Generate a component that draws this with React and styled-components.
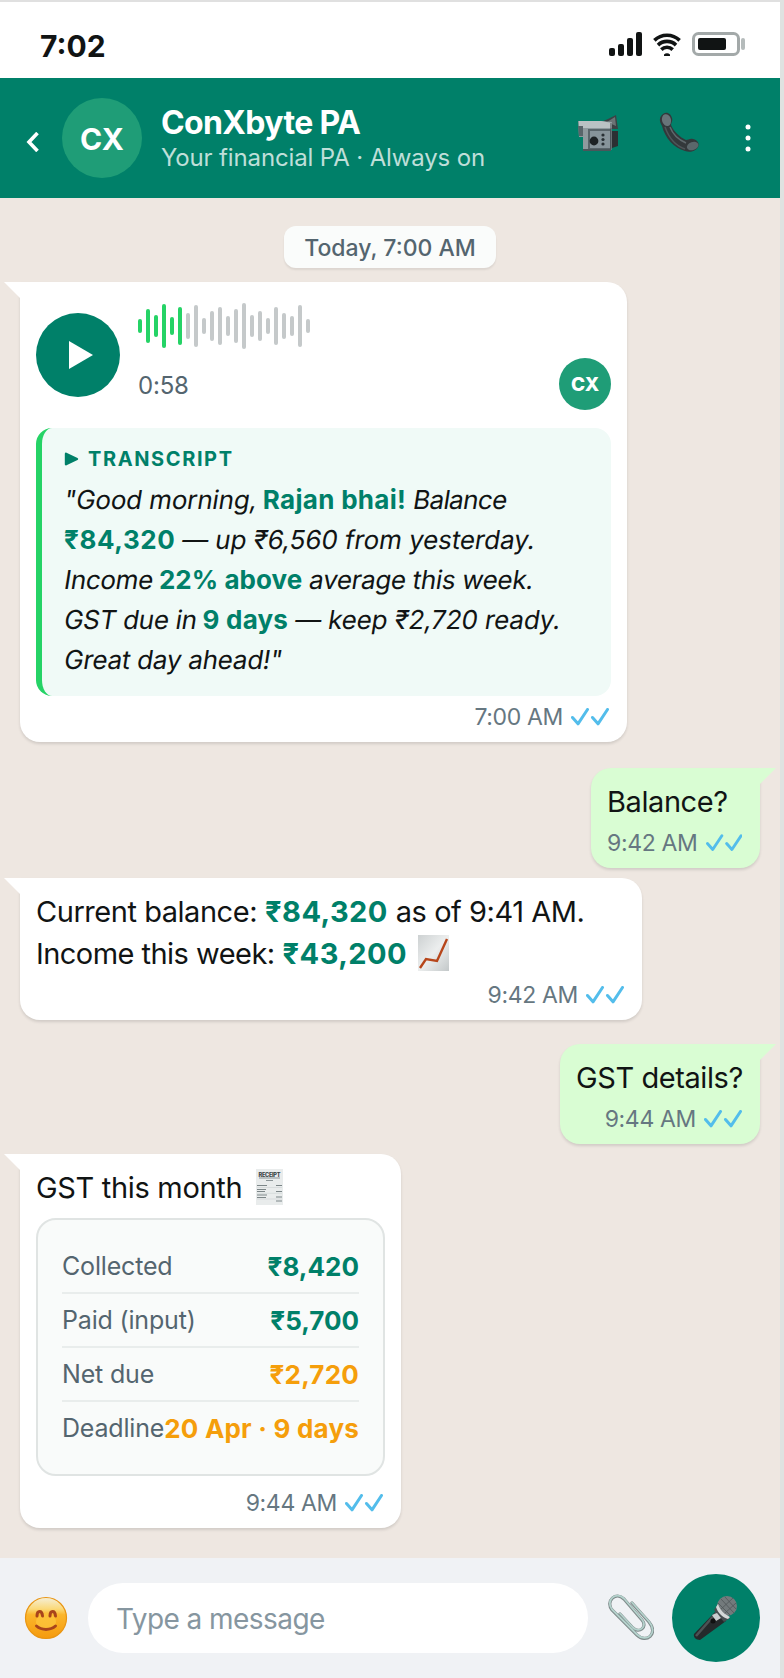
import React from 'react';
import styled, { createGlobalStyle } from 'styled-components';

const GlobalStyle = createGlobalStyle`
  * {
    box-sizing: border-box;
  }
  body {
    margin: 0;
    background: #dfe2e1;
    font-family: Inter, "Liberation Sans", sans-serif;
    color: #111414;
  }
`;

const Phone = styled.div`
  display: flex;
  flex-direction: column;
  width: 780px;
  height: 1678px;
  border-top: 2px solid #e0e0e0;
`;

const StatusBar = styled.div`
  display: flex;
  align-items: center;
  justify-content: space-between;
  height: 76px;
  padding: 10px 35px 0 40px;
  background: #fff;
`;

const Clock = styled.span`
  padding-top: 1px;
  font-size: 30px;
  font-weight: 700;
  line-height: 36px;
`;

const StatusIcons = styled.div`
  display: flex;
  align-items: center;
  gap: 11px;
  height: 24px;
  padding-bottom: 2px;
`;

const Header = styled.header`
  display: flex;
  align-items: center;
  height: 120px;
  padding: 0 29px 0 26px;
  background: #008069;
`;

const BackButton = styled.button`
  display: flex;
  width: 36px;
  padding: 7px 0 0;
  border: none;
  background: none;
`;

const Avatar = styled.div`
  display: flex;
  align-items: center;
  justify-content: center;
  flex: none;
  width: ${props => props.$size}px;
  height: ${props => props.$size}px;
  padding-top: 1px;
  border-radius: 50%;
  background: #1f9d77;
  color: #fff;
  font-size: ${props => props.$font}px;
  font-weight: ${props => props.$weight || 700};
`;

const Contact = styled.div`
  flex: 1;
  margin-left: 19px;
  padding-top: 2px;
  color: #fff;
  white-space: nowrap;
`;

const ContactName = styled.div`
  font-size: 32px;
  font-weight: 700;
  line-height: 38px;
  letter-spacing: -0.64px;
`;

const ContactInfo = styled.div`
  font-size: 24px;
  line-height: 32px;
  letter-spacing: -0.14px;
  color: rgba(255, 255, 255, 0.75);
`;

const HeaderActions = styled.div`
  display: flex;
  align-items: center;
  padding-bottom: 10px;
`;

const ActionButton = styled.button`
  display: flex;
  margin-left: ${props => props.$gap || 0}px;
  padding: ${props => props.$drop || 0}px 0 0;
  border: none;
  background: none;
`;

const Chat = styled.main`
  display: flex;
  flex-direction: column;
  height: 1360px;
  padding: 28px 20px 0;
  background: #eee7e1;
`;

const DateChip = styled.div`
  align-self: center;
  width: 212px;
  height: 42px;
  margin-bottom: 14px;
  border-radius: 12px;
  background: #fafcfb;
  box-shadow: 0 2px 2px rgba(0, 0, 0, 0.08);
  color: #54656f;
  font-size: 23px;
  font-weight: 500;
  line-height: 44px;
  text-align: center;
  white-space: nowrap;
`;

const Bubble = styled.section`
  position: relative;
  display: flex;
  flex-direction: column;
  align-self: ${props => (props.$out ? 'flex-end' : 'flex-start')};
  width: ${props => props.$width}px;
  margin-top: ${props => props.$gap || 0}px;
  padding: 12px 16px 10px;
  border-radius: ${props => (props.$out ? '20px 0 20px 20px' : '0 20px 20px 20px')};
  background: ${props => (props.$out ? '#d9fdd3' : '#fff')};
  box-shadow: 0 2px 3px rgba(0, 0, 0, 0.12);
  font-size: 29px;
  line-height: 42px;
  white-space: nowrap;

  &::before {
    content: '';
    position: absolute;
    top: 0;
    ${props => (props.$out ? 'right' : 'left')}: -16px;
    border-top: 16px solid ${props => (props.$out ? '#d9fdd3' : '#fff')};
    border-${props => (props.$out ? 'right' : 'left')}: 16px solid transparent;
  }
`;

const Line = styled.div`
  display: flex;
  align-items: center;
  height: 42px;
  padding-top: 2px;
  gap: ${props => props.$gap || 8}px;
  letter-spacing: ${props => props.$track || -0.42}px;
`;

const LineIcon = styled.span`
  display: flex;
  margin: 0 0 2px 3px;
`;

const Amount = styled.strong`
  color: #008069;
  font-weight: 700;
  letter-spacing: 0.44px;
`;

const MetaRow = styled.div`
  display: flex;
  align-items: center;
  justify-content: flex-end;
  gap: 8px;
  height: 32px;
  margin-top: 4px;
  padding: 1px 2px 0 0;
  color: #667781;
  font-size: 23px;
  line-height: 32px;
  letter-spacing: -0.34px;
`;

const Voice = styled.div`
  display: flex;
  height: 122px;
  margin-bottom: 12px;
`;

const PlayButton = styled.button`
  display: flex;
  align-items: center;
  justify-content: center;
  width: 84px;
  height: 84px;
  margin: 19px 18px 0 0;
  padding: 0 0 0 5px;
  border: none;
  border-radius: 50%;
  background: #008069;
`;

const VoiceBody = styled.div`
  flex: 1;
`;

const Wave = styled.div`
  display: flex;
  align-items: center;
  gap: 4px;
  height: 64px;
`;

const WaveBar = styled.span`
  width: 4px;
  height: ${props => props.$height}px;
  border-radius: 2px;
  background: ${props => (props.$played ? '#25d366' : '#c5c9ca')};
`;

const VoiceInfo = styled.div`
  display: flex;
  align-items: center;
  justify-content: space-between;
  height: 52px;
  color: #54656f;
  font-size: 24px;
  letter-spacing: -0.2px;
`;

const Duration = styled.span`
  padding-top: 3px;
`;

const Transcript = styled.div`
  height: 268px;
  padding: 15px 0 0 22px;
  border-left: 6px solid #25d366;
  border-radius: 16px;
  background: #f0faf7;
`;

const TranscriptTitle = styled.div`
  display: flex;
  align-items: center;
  gap: 9px;
  height: 32px;
  margin-bottom: 4px;
  color: #008069;
  font-size: 20px;
  font-weight: 700;
  letter-spacing: 1.6px;
`;

const TranscriptLine = styled.div`
  display: flex;
  gap: 7px;
  height: 40px;
  font-size: 26px;
  line-height: 41px;
`;

// Inter's own italic swaps in a single-storey "a", so the upright face is slanted
const Slanted = styled.span`
  margin-left: -1px;
  transform: skewX(-9deg);
  transform-origin: 0 75%;
  letter-spacing: ${props => props.$track || -0.3}px;
`;

const Bold = styled.strong`
  color: #008069;
  letter-spacing: ${props => props.$track || 0.2}px;
`;

const TaxCard = styled.div`
  margin: 10px 0 6px;
  padding: 20px 24px;
  border: 2px solid #e0e4e3;
  border-radius: 20px;
  background: #f9fbfa;
`;

const TaxRow = styled.div`
  display: flex;
  justify-content: space-between;
  height: 54px;
  border-bottom: 2px solid #e9edec;
  color: #54656f;
  font-size: 25px;
  line-height: 53px;
  letter-spacing: -0.18px;

  &:last-child {
    height: 52px;
    border-bottom: none;
  }
`;

const TaxValue = styled.strong`
  color: ${props => (props.$due ? '#f59e0b' : '#008069')};
  font-size: 26px;
  letter-spacing: ${props => (props.$due ? 0.2 : 0)}px;
`;

const Footer = styled.footer`
  display: flex;
  align-items: center;
  height: 120px;
  padding: 0 20px 0 24px;
  background: #f0f2f5;
`;

const MessageInput = styled.div`
  width: 500px;
  height: 70px;
  margin: 0 20px 0 20px;
  padding-left: 28px;
  border-radius: 35px;
  background: #fff;
  color: #8696a0;
  font-size: 28px;
  line-height: 72px;
  letter-spacing: -0.56px;
`;

const MicButton = styled.button`
  display: flex;
  align-items: center;
  justify-content: center;
  width: 88px;
  height: 88px;
  margin-left: auto;
  padding: 0 3px 0 0;
  border: none;
  border-radius: 50%;
  background: #008069;
`;

const SignalIcon = () => (
  <svg width="33" height="24" viewBox="0 0 33 24" fill="#111414">
    <rect x="0" y="16" width="6" height="8" rx="2" />
    <rect x="9" y="12" width="6" height="12" rx="2" />
    <rect x="18" y="6" width="6" height="18" rx="2" />
    <rect x="27" y="0" width="6" height="24" rx="2" />
  </svg>
);

const WifiIcon = () => (
  <svg width="28" height="24" viewBox="0 0 28 24" fill="none" stroke="#111414" strokeWidth="3.6">
    <path d="M1.4 8.4a18 18 0 0 1 25.2 0" />
    <path d="M5 13.1a12.8 12.8 0 0 1 18 0" />
    <path d="M8.3 17.6a8.2 8.2 0 0 1 11.4 0" />
    <path d="M11 24v-1.5a4 4 0 0 1 6 0V24z" fill="#111414" stroke="none" />
  </svg>
);

const BatteryIcon = () => (
  <svg width="53" height="24" viewBox="0 0 53 24">
    <rect x="1.5" y="1.5" width="45" height="21" rx="5" fill="none" stroke="#a3a9a9" strokeWidth="3" />
    <rect x="6" y="6" width="28" height="12" rx="2" fill="#111414" />
    <rect x="49" y="6" width="4" height="12" rx="2" fill="#b5bbbb" />
  </svg>
);

const BackIcon = () => (
  <svg width="14" height="20" viewBox="0 0 14 20">
    <path d="M11.5 1L3 10l8.5 9" fill="none" stroke="#fff" strokeWidth="3.6" />
  </svg>
);

const CameraIcon = () => (
  <svg width="42" height="38" viewBox="0 0 42 38">
    <path d="M24 8l7-3 8-4 2 14h-9z" fill="#3b4144" />
    <path d="M30 8l8-5 1 9z" fill="#6b7375" />
    <path d="M35 17h6v15l-6 2z" fill="#2b3033" />
    <path d="M1 7h23l11 1v27l-2 2H6V23H2z" fill="#8f9a9e" />
    <path d="M2 7h22l11 2v5H2z" fill="#bac2c4" />
    <path d="M1 12h5v10H2z" fill="#59656a" />
    <path d="M11 15h23v20H11z" fill="#59656a" />
    <path d="M13 17h20v17H13z" fill="#87949a" />
    <circle cx="17" cy="27" r="4.4" fill="#1d2224" />
    <g fill="#283034">
      <circle cx="26" cy="21" r="1.6" />
      <circle cx="26" cy="25.5" r="1.6" />
      <circle cx="26" cy="30" r="1.6" />
    </g>
    <path d="M6 35h28v2H6z" fill="#4b565a" />
    <path d="M34 9v26" stroke="#3c474b" />
  </svg>
);

const PhoneIcon = () => (
  <svg width="42" height="42" viewBox="0 0 42 42">
    <path
      d="M4 2c4-3 8 0 9 4 1 3-1 5-1 7 3 7 9 12 15 15 2 0 4-2 7-1 4 1 7 4 5 8-2 4-8 6-13 4C15 36 6 26 3 14 0 9 0 5 4 2z"
      fill="#33383b"
    />
    <path d="M11 15c3 8 9 13 16 16" fill="none" stroke="#60696d" strokeWidth="1.5" />
    <ellipse cx="7.5" cy="8" rx="4.5" ry="6" fill="#687479" transform="rotate(-15 8 8)" />
    <ellipse cx="34" cy="34" rx="6" ry="4" fill="#5b676b" transform="rotate(-20 34 35)" />
    <path d="M6 15c4 11 11 19 20 22" fill="none" stroke="#4e5659" strokeWidth="1.5" />
  </svg>
);

const DotsIcon = () => (
  <svg width="6" height="28" viewBox="0 0 6 28" fill="#fff">
    <circle cx="3" cy="3" r="2.5" />
    <circle cx="3" cy="14" r="2.5" />
    <circle cx="3" cy="25" r="2.5" />
  </svg>
);

const PlayIcon = () => (
  <svg width="24" height="28" viewBox="0 0 24 28">
    <path d="M0 0l24 14L0 28z" fill="#fff" />
  </svg>
);

const SmallPlayIcon = () => (
  <svg width="15" height="14" viewBox="0 0 15 14">
    <path d="M2 1.8L13 7 2 12.2z" fill="#008069" stroke="#008069" strokeWidth="2.4" strokeLinejoin="round" />
  </svg>
);

const TicksIcon = () => (
  <svg width="38" height="18" viewBox="0 0 38 18" fill="none" stroke="#53bdeb" strokeWidth="3" strokeLinecap="round" strokeLinejoin="round">
    <path d="M1.5 9.5l5.5 6.3L16.5 1.5" />
    <path d="M21.500 9.500l5.500 6.300L36.500 1.500" />
  </svg>
);

const ChartIcon = () => (
  <svg width="31" height="36" viewBox="0 0 31 36">
    <defs>
      <linearGradient id="paper" x1="0" y1="0" x2="1" y2="1">
        <stop offset="0" stopColor="#cdd1d2" />
        <stop offset="0.5" stopColor="#eceeee" />
        <stop offset="1" stopColor="#c3c8c9" />
      </linearGradient>
    </defs>
    <rect width="31" height="36" fill="url(#paper)" />
    <path d="M2 33l6-9 11 2L29 4" fill="none" stroke="#b7461b" strokeWidth="2.4" />
  </svg>
);

const ReceiptIcon = () => (
  <svg width="27" height="36" viewBox="0 0 27 36">
    <rect width="27" height="36" fill="#e9ecec" />
    <text x="13.5" y="7.5" fontSize="5.6" fontWeight="800" letterSpacing="0" textAnchor="middle" textLength="22" fill="#394246">RECEIPT</text>
    <path d="M3 9h21M10 11.5h7" stroke="#8b9496" />
    <path d="M1 16.5h10M1 20.5h9M1 22.5h8M1 26h10M1 28.5h9" stroke="#7c8688" />
    <path d="M20 16.5h6M20 22.5h6M20 28h6M20 32h6" stroke="#7c8688" strokeWidth="1.2" />
    <path d="M1 18.500h25M1 24.300h25M1 30h25" stroke="#cdd2d3" strokeWidth="0.6" />
  </svg>
);

const SmileIcon = () => (
  <svg width="44" height="44" viewBox="0 0 44 44">
    <defs>
      <linearGradient id="face" x1="0" y1="0" x2="0" y2="1">
        <stop offset="0" stopColor="#f5efd8" />
        <stop offset="0.28" stopColor="#fbd978" />
        <stop offset="0.42" stopColor="#fbb62c" />
        <stop offset="1" stopColor="#f59a0d" />
      </linearGradient>
    </defs>
    <circle cx="22" cy="22" r="20.5" fill="url(#face)" stroke="#e99512" strokeWidth="1.2" />
    <ellipse cx="22" cy="26" rx="10" ry="9" fill="#fdc73e" opacity="0.7" />
    <g fill="none" stroke="#a9441b" strokeWidth="3" strokeLinecap="round">
      <path d="M13 20c0-6 5-6 5.500 0M26 20c0-6 5-6 5.500 0" />
      <path d="M12.500 30c5 4.500 14 4.500 19 0" />
    </g>
  </svg>
);

const ClipIcon = () => (
  <svg width="46" height="48" viewBox="0 0 46 48" fill="none" strokeLinecap="round">
    <path
      d="M24 9l17 19c10 12-3 22-12 13L4 16C-3 7 8-3 16 5l18 21c6 7-3 14-9 8L12 20"
      stroke="#7f8b8b"
      strokeWidth="3.2"
    />
    <path
      d="M24 8.5l17 19c10 12-3 22-12 13L4 15.5C-3 6.5 8-3.5 16 4.5l18 21c6 7-3 14-9 8L12 19.5"
      stroke="#b4d2cc"
      strokeWidth="1.8"
    />
  </svg>
);

const MicIcon = () => (
  <svg width="46" height="46" viewBox="0 0 46 46">
    <path d="M25 15l9 11-26 19c-4 0-7-3-6-6z" fill="#25292b" />
    <path d="M25 17L4 41" stroke="#4c5355" strokeWidth="2.5" />
    <path d="M26 9l12 14-6 4-10-12z" fill="#464d50" />
    <circle cx="35" cy="11" r="10" fill="#737a7c" />
    <path d="M29 4l13 14M33 2l11 12M26 8l12 12M28 15L41 3M32 19L44 8" stroke="#4f5658" strokeWidth="0.8" />
    <path d="M26 9c2 6 6 10 12 13l-2 2c-6-2-10-6-12-12z" fill="#d4d8d8" />
    <path d="M20 20l5-2 4 5-5 3z" fill="#c8cdce" />
    <circle cx="21" cy="26" r="2.5" fill="#111" />
  </svg>
);

const bars = [14, 34, 22, 44, 18, 38, 26, 42, 16, 30, 38, 20, 34, 46, 22, 30, 16, 38, 26, 20, 42, 14];

const taxes = [
  { label: 'Collected', value: '₹8,420' },
  { label: 'Paid (input)', value: '₹5,700' },
  { label: 'Net due', value: '₹2,720', due: true },
  { label: 'Deadline', value: '20 Apr · 9 days', due: true },
];

function Meta({ time }) {
  return (
    <MetaRow>
      <span>{time}</span>
      <TicksIcon />
    </MetaRow>
  );
}

function VoiceMessage() {
  return (
    <Bubble $width={607}>
      <Voice>
        <PlayButton aria-label="Play"><PlayIcon /></PlayButton>
        <VoiceBody>
          <Wave>
            {bars.map((height, i) => <WaveBar key={i} $height={height} $played={i < 6} />)}
          </Wave>
          <VoiceInfo>
            <Duration>0:58</Duration>
            <Avatar $size={52} $font={19} $weight={800}>CX</Avatar>
          </VoiceInfo>
        </VoiceBody>
      </Voice>
      <Transcript>
        <TranscriptTitle><SmallPlayIcon />TRANSCRIPT</TranscriptTitle>
        <TranscriptLine>
          <Slanted $track={-0.15}>"Good morning,</Slanted>
          <Bold $track={0.3}>Rajan bhai!</Bold>
          <Slanted $track={-0.6}>Balance</Slanted>
        </TranscriptLine>
        <TranscriptLine>
          <Bold $track={0.6}>₹84,320</Bold>
          <Slanted $track={-0.1}>— up ₹6,560 from yesterday.</Slanted>
        </TranscriptLine>
        <TranscriptLine>
          <Slanted>Income</Slanted>
          <Bold $track={0.05}>22% above</Bold>
          <Slanted $track={-0.34}>average this week.</Slanted>
        </TranscriptLine>
        <TranscriptLine>
          <Slanted>GST due in</Slanted>
          <Bold>9 days</Bold>
          <Slanted $track={-0.15}>— keep ₹2,720 ready.</Slanted>
        </TranscriptLine>
        <TranscriptLine>
          <Slanted $track={-0.25}>Great day ahead!"</Slanted>
        </TranscriptLine>
      </Transcript>
      <Meta time="7:00 AM" />
    </Bubble>
  );
}

function App() {
  return (
    <>
      <GlobalStyle />
      <Phone>
        <StatusBar>
          <Clock>7:02</Clock>
          <StatusIcons>
            <SignalIcon />
            <WifiIcon />
            <BatteryIcon />
          </StatusIcons>
        </StatusBar>
        <Header>
          <BackButton aria-label="Back"><BackIcon /></BackButton>
          <Avatar $size={80} $font={30}>CX</Avatar>
          <Contact>
            <ContactName>ConXbyte PA</ContactName>
            <ContactInfo>Your financial PA · Always on</ContactInfo>
          </Contact>
          <HeaderActions>
            <ActionButton aria-label="Video call"><CameraIcon /></ActionButton>
            <ActionButton aria-label="Call" $gap={40}><PhoneIcon /></ActionButton>
            <ActionButton aria-label="Menu" $gap={44} $drop={10}><DotsIcon /></ActionButton>
          </HeaderActions>
        </Header>
        <Chat>
          <DateChip>Today, 7:00 AM</DateChip>
          <VoiceMessage />
          <Bubble $out $width={169} $gap={26}>
            <Line>Balance?</Line>
            <Meta time="9:42 AM" />
          </Bubble>
          <Bubble $width={622} $gap={10}>
            <Line $track={-0.46}>
              <span>Current balance:</span><Amount>₹84,320</Amount><span>as of 9:41 AM.</span>
            </Line>
            <Line $track={-0.54}>
              <span>Income this week:</span>
              <Amount>₹43,200</Amount>
              <LineIcon><ChartIcon /></LineIcon>
            </Line>
            <Meta time="9:42 AM" />
          </Bubble>
          <Bubble $out $width={200} $gap={24}>
            <Line>GST details?</Line>
            <Meta time="9:44 AM" />
          </Bubble>
          <Bubble $width={381} $gap={10}>
            <Line $gap={11} $track={-0.32}>
              <span>GST this month</span>
              <LineIcon><ReceiptIcon /></LineIcon>
            </Line>
            <TaxCard>
              {taxes.map(tax => (
                <TaxRow key={tax.label}>
                  <span>{tax.label}</span>
                  <TaxValue $due={tax.due}>{tax.value}</TaxValue>
                </TaxRow>
              ))}
            </TaxCard>
            <Meta time="9:44 AM" />
          </Bubble>
        </Chat>
        <Footer>
          <SmileIcon />
          <MessageInput>Type a message</MessageInput>
          <ClipIcon />
          <MicButton aria-label="Record"><MicIcon /></MicButton>
        </Footer>
      </Phone>
    </>
  );
}

export default App;
